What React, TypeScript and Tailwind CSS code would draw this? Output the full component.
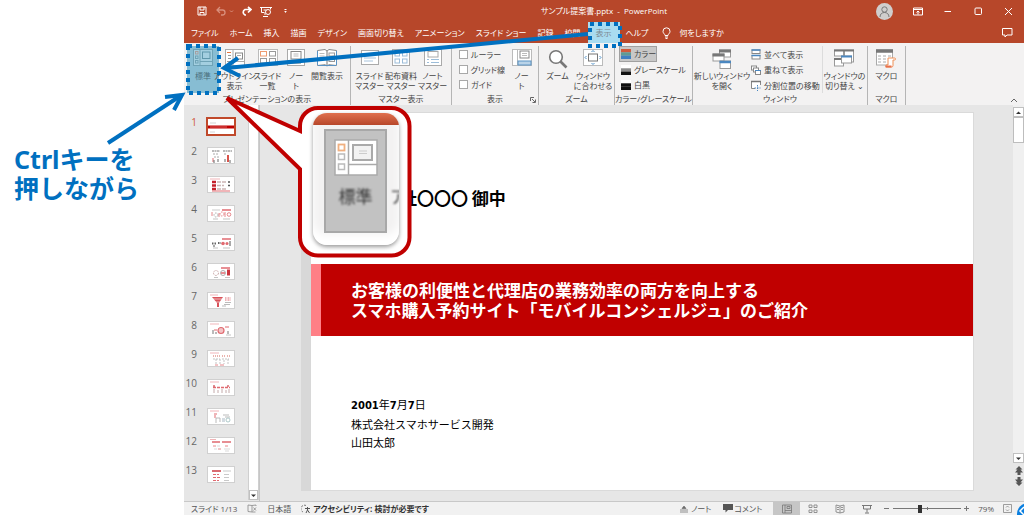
import type { ReactNode } from "react";
import clsx from "clsx";

const uiFont = "font-['Open_Sans','Noto_Sans_CJK_JP',sans-serif]";

/* ---------- icons ---------- */

function Svg({ w, h, children, className }: { w: number; h: number; children: ReactNode; className?: string }) {
  return (
    <svg width={w} height={h} viewBox={`0 0 ${w} ${h}`} fill="none" aria-hidden="true" className={clsx("shrink-0", className)}>
      {children}
    </svg>
  );
}

const NormalIcon = () => (
  <Svg w={20} h={18}>
    <rect x="0.5" y="0.5" width="19" height="16" fill="#a3cfe0" stroke="#6fa3b6" />
    <path d="M7 1v15M7 12.5h12" stroke="#6fa3b6" />
    <rect x="9.5" y="3" width="7.5" height="6.5" stroke="#5f97ab" />
    <rect x="2.5" y="2.5" width="2.5" height="2.5" stroke="#a59fa0" />
    <rect x="2.5" y="7" width="2.5" height="2.5" stroke="#6fa3b6" />
    <rect x="2.5" y="11.5" width="2.5" height="2.5" stroke="#6fa3b6" />
  </Svg>
);

const OutlineIcon = () => (
  <Svg w={20} h={18}>
    <rect x="0.5" y="0.5" width="19" height="16" fill="#fff" stroke="#aaa" />
    <path d="M8 1v15M8 12.5h12" stroke="#aaa" />
    <path d="M2 3.5h4" stroke="#e8743c" />
    <path d="M3 6.5h3M3 9.5h3M2 12.5h4" stroke="#999" />
    <rect x="10.5" y="4" width="7" height="6" stroke="#888" />
    <path d="M12 6.500h4" stroke="#aaa" />
  </Svg>
);

const SorterIcon = () => (
  <Svg w={20} h={18}>
    <rect x="0.5" y="0.5" width="19" height="16" fill="#fff" stroke="#bbb" />
    <rect x="2.5" y="2.5" width="6" height="4.5" stroke="#ee9c70" />
    <rect x="11.5" y="2.5" width="6" height="4.5" stroke="#999" />
    <rect x="2.5" y="9.5" width="6" height="4.5" stroke="#999" />
    <rect x="11.5" y="9.5" width="6" height="4.5" stroke="#999" />
  </Svg>
);

const NotesPageIcon = () => (
  <Svg w={20} h={18}>
    <rect x="1.5" y="0.5" width="17" height="16" fill="#fff" stroke="#aaa" />
    <rect x="5" y="2.5" width="10" height="7.5" stroke="#888" />
    <path d="M7.500 5h5M7.500 7h5M5 12.500h10M5 14.500h10" stroke="#bbb" />
  </Svg>
);

const ReadingIcon = () => (
  <Svg w={20} h={18}>
    <path d="M0.500 1.500 8 .5 10 2l2-1.500 7.500 1v15l-7.500-.8L10 17l-2-1.300-7.500.8z" fill="#fff" stroke="#888" />
    <path d="M10 2v15" stroke="#777" />
    <path d="M1 16.500h18M.5 2v14M19.500 2v14" stroke="#5b93c4" />
    <path d="M2.500 4.500h5M2.500 7h5M2.500 9.500h5" stroke="#bbb" />
    <rect x="12" y="4" width="5.5" height="3" stroke="#999" />
    <rect x="12" y="9.5" width="5.5" height="3" stroke="#999" />
  </Svg>
);

const SlideMasterIcon = () => (
  <Svg w={18} h={18}>
    <rect x="0.5" y="1.5" width="17" height="14" fill="#fff" stroke="#aaa" />
    <path d="M5 5.500h8" stroke="#888" />
    <path d="M3 9h12M3 12h9" stroke="#a9c4dd" />
  </Svg>
);

const HandoutMasterIcon = () => (
  <Svg w={18} h={18}>
    <rect x="0.5" y="0.5" width="17" height="16" fill="#fff" stroke="#aaa" />
    <rect x="3" y="3" width="4.5" height="4" stroke="#9cbdd9" />
    <rect x="10.5" y="3" width="4.5" height="4" stroke="#9cbdd9" />
    <rect x="3" y="10" width="4.5" height="4" stroke="#9cbdd9" />
    <rect x="10.5" y="10" width="4.5" height="4" stroke="#9cbdd9" />
  </Svg>
);

const NotesMasterIcon = () => (
  <Svg w={18} h={18}>
    <rect x="0.5" y="0.5" width="17" height="16" fill="#fff" stroke="#aaa" />
    <rect x="4" y="2.5" width="10" height="5.5" stroke="#aaa" />
    <path d="M3 10.500h2M7 10.500h8M3 13.500h2M7 13.500h8" stroke="#9cbdd9" />
  </Svg>
);

const NotesPaneIcon = () => (
  <Svg w={20} h={18}>
    <rect x="0.5" y="0.5" width="19" height="16" fill="#fff" stroke="#bbb" />
    <path d="M5.500 1v15" stroke="#bbb" />
    <rect x="8" y="2" width="9" height="7" stroke="#888" />
    <path d="M10 4.500h5M10 6.500h5" stroke="#bbb" />
    <rect x="6" y="12" width="13" height="4" fill="#b9d3e8" stroke="#5b93c4" />
  </Svg>
);

const ZoomIcon = () => (
  <Svg w={20} h={20}>
    <circle cx="8" cy="8" r="6.3" fill="#fff" stroke="#777" strokeWidth="1.6" />
    <path d="m12.500 12.500 6 6" stroke="#777" strokeWidth="2.6" />
  </Svg>
);

const FitIcon = () => (
  <Svg w={20} h={18}>
    <rect x="0.5" y="0.5" width="19" height="16" fill="#fff" stroke="#bbb" />
    <rect x="5.5" y="5" width="9" height="7" stroke="#777" />
    <path d="m8.500 3 1.500-1.500L11.500 3M8.500 14l1.500 1.500 1.500-1.500M3.500 7 2 8.500 3.500 10M16.500 7 18 8.500 16.500 10" stroke="#4f90c8" />
  </Svg>
);

const NewWindowIcon = () => (
  <Svg w={20} h={20}>
    <rect x="7.5" y="1" width="11" height="7" fill="#fff" stroke="#999" />
    <path d="M7 2h12" stroke="#777" strokeWidth="3" />
    <rect x="1" y="5" width="11" height="7" fill="#fff" stroke="#999" />
    <path d="M.5 6h12" stroke="#777" strokeWidth="3" />
    <rect x="8" y="12" width="10.5" height="7.5" fill="#fff" stroke="#999" />
    <path d="M7.500 13h11.500" stroke="#4a87c0" strokeWidth="2.5" />
  </Svg>
);

const SwitchWindowIcon = () => (
  <Svg w={20} h={18}>
    <rect x="0.5" y="1" width="9" height="6" fill="#fff" stroke="#999" />
    <rect x="10.5" y="1" width="9" height="12" fill="#fff" stroke="#999" />
    <path d="M0 1.500h20" stroke="#777" strokeWidth="2" />
    <rect x="0.5" y="10" width="9" height="7" fill="#fff" stroke="#999" />
    <path d="M0 10h10" stroke="#777" strokeWidth="2" />
    <rect x="7.5" y="7" width="10" height="7" fill="#fff" stroke="#999" />
    <path d="M7 7.500h11" stroke="#4a87c0" strokeWidth="2" />
  </Svg>
);

const MacroIcon = () => (
  <Svg w={20} h={19}>
    <rect x="0.5" y="1" width="16" height="15" fill="#fff" stroke="#aaa" />
    <path d="M0 2h17" stroke="#777" strokeWidth="3.5" />
    <path d="M2 7h3M7 7h3M12 7h3M2 10h3M7 10h3M2 13h3M7 13h3" stroke="#aaa" />
    <path d="M12 9h6.500a1 1 0 0 1 0 2H17v5.500a1.500 1.500 0 0 1-1.500 1.500H10v-2h2z" fill="#fff" stroke="#ef8f55" />
    <path d="M9.500 17.500h6" stroke="#e8704c" strokeWidth="2" />
  </Svg>
);

const ArrangeIcon = () => (
  <Svg w={10} h={11}>
    <rect x="1" y="1" width="8" height="3.5" fill="#fff" stroke="#888" />
    <rect x="1" y="6.5" width="8" height="3.5" fill="#fff" stroke="#888" />
    <path d="M.5 1h9M.5 6.500h9" stroke="#4a87c0" strokeWidth="1.5" />
  </Svg>
);

const CascadeIcon = () => (
  <Svg w={10} h={11}>
    <rect x="0.5" y="1" width="5" height="4" fill="#fff" stroke="#888" />
    <rect x="2.5" y="3" width="5" height="4" fill="#fff" stroke="#888" />
    <rect x="4.5" y="5.5" width="5" height="4" fill="#fff" stroke="#888" />
    <path d="M4 5.500h6" stroke="#4a87c0" />
  </Svg>
);

const SplitIcon = () => (
  <Svg w={10} h={11}>
    <path d="M4 8.500H.5v-7h9V5" fill="#fff" stroke="#888" />
    <path d="M0 1.500h10" stroke="#777" strokeWidth="1.5" />
    <path d="M6.500 5v6M3.500 8h6" stroke="#4a87c0" strokeDasharray="1.5 1" />
  </Svg>
);

function Swatch({ colors }: { colors: [string, string, string] }) {
  return (
    <Svg w={10} h={10}>
      <rect width="10" height="3.4" fill={colors[0]} />
      <rect y="3.3" width="10" height="3.4" fill={colors[1]} />
      <rect y="6.6" width="10" height="3.4" fill={colors[2]} />
    </Svg>
  );
}

/* ---------- title bar ---------- */

function TitleBar() {
  return (
    <header className="grid h-[22px] shrink-0 grid-cols-[1fr_auto_1fr] items-center bg-[#b7472a] text-white">
      <div className="flex items-center pl-[13px]">
        <button aria-label="上書き保存" className="mr-[9px]">
          <Svg w={10} h={10}>
            <path d="M1 1h8v8H1zM3 1v3h4V1M3 9V6.500h4V9" stroke="#fff" />
          </Svg>
        </button>
        <button aria-label="元に戻す" className="mr-[3px]">
          <Svg w={10} h={10}>
            <path d="M4 1 1 4l3 3M1 4h5.500a2.500 2.500 0 0 1 0 5H5" stroke="#d98f7c" strokeWidth="1.3" />
          </Svg>
        </button>
        <Svg w={5} h={5} className="mr-[7px]">
          <path d="m1 1.500 1.500 1.500L4 1.500" stroke="#d98f7c" />
        </Svg>
        <button aria-label="やり直し" className="mr-[8px]">
          <Svg w={11} h={10}>
            <path d="m7 1 3 2.500-3 3M10 3.500H4A3 3 0 0 0 4 9h1" stroke="#fff" strokeWidth="1.7" />
          </Svg>
        </button>
        <button aria-label="先頭から開始" className="mr-[11px]">
          <Svg w={12} h={11}>
            <path d="M0 1.500h12M1.500 1.500v5h3M10.500 1.500v2M5 7v2M3 10.500h5" stroke="#fff" />
            <circle cx="8" cy="6" r="2.5" stroke="#fff" />
            <path d="M3.500 4h3" stroke="#fff" />
          </Svg>
        </button>
        <button aria-label="クイック アクセスのカスタマイズ">
          <Svg w={5} h={6}>
            <path d="M1.500 1.500h2" stroke="#fff" />
            <path d="M1.200 3h2.600L2.500 5z" fill="#fff" />
          </Svg>
        </button>
      </div>
      <h1 className="whitespace-pre text-[8px] font-normal">サンプル提案書.pptx  -  PowerPoint</h1>
      <div className="flex items-center justify-end gap-[20px] pr-[11px]">
        <button aria-label="アカウント">
          <Svg w={17} h={17}>
            <circle cx="8.5" cy="8.5" r="8.5" fill="#d0cecd" />
            <circle cx="8.5" cy="6.5" r="2.7" stroke="#777" />
            <path d="M4 14c0-3 2-4.500 4.500-4.500S13 11 13 14" stroke="#777" />
          </Svg>
        </button>
        <button aria-label="リボンの表示オプション">
          <Svg w={10} h={9}>
            <path d="M.5 1h9v7h-9zM.5 2.500h9M5 7.500V4.500M3.500 5.500 5 4l1.500 1.500" stroke="#fff" />
          </Svg>
        </button>
        <button aria-label="最小化">
          <Svg w={10} h={9}>
            <path d="M1.500 4.500H8" stroke="#fff" />
          </Svg>
        </button>
        <button aria-label="元に戻す (縮小)">
          <Svg w={10} h={9}>
            <rect x="2" y="1" width="6.5" height="6.5" rx="1" stroke="#fff" />
          </Svg>
        </button>
        <button aria-label="閉じる">
          <Svg w={10} h={9}>
            <path d="m2 1 7 7M9 1 2 8" stroke="#fff" />
          </Svg>
        </button>
      </div>
    </header>
  );
}

const tabs = ["ファイル", "ホーム", "挿入", "描画", "デザイン", "画面切り替え", "アニメーション", "スライド ショー", "記録", "校閲"];

function TabBar() {
  return (
    <nav className="flex h-[21px] shrink-0 items-center bg-[#b7472a] pr-[11px] pl-[7px] text-[8px] whitespace-nowrap text-white">
      <div className="flex items-center gap-[11px]">
        {tabs.map((tab) => (
          <button key={tab}>{tab}</button>
        ))}
      </div>
      <button aria-current="page" className="ml-[7px] h-[21px] w-[32px] bg-[#a9dcf0] text-[#7d8a90]">
        表示
      </button>
      <button className="ml-[6px]">ヘルプ</button>
      <button className="ml-[14px] flex items-center gap-[8px]">
        <Svg w={9} h={12}>
          <path d="M3 8.500C3 7 1 6.500 1 4.300a3.500 3.500 0 0 1 7 0C8 6.500 6 7 6 8.500zM3 10h3M3.500 11.500h2" stroke="#fff" />
        </Svg>
        何をしますか
      </button>
      <button aria-label="コメント" className="ml-auto">
        <Svg w={11} h={10}>
          <path d="M.5.5h9.500v6.500H5L3 9V7H.5z" stroke="#fff" />
        </Svg>
      </button>
    </nav>
  );
}

/* ---------- ribbon ---------- */

function Group({ label, className, children }: { label: string; className?: string; children: ReactNode }) {
  return (
    <section className="relative flex h-[59px] shrink-0 flex-col border-r border-[#b5b5b5]">
      <div className={clsx("flex flex-1 items-start", className)}>{children}</div>
      <h2 className="h-[11px] text-center font-normal">{label}</h2>
    </section>
  );
}

function BigButton({ icon, lines, className }: { icon: ReactNode; lines: string[]; className: string }) {
  return (
    <button className={clsx("flex shrink-0 flex-col items-center pt-[3px]", className)}>
      <span className="flex h-[22px] items-start">{icon}</span>
      {lines.map((line) => (
        <span key={line}>{line}</span>
      ))}
    </button>
  );
}

function Ribbon() {
  return (
    <div className="flex h-[62px] shrink-0 items-start bg-[#f3f2f2] pt-[3px] text-[8px] leading-[10px] whitespace-nowrap text-[#444]">
      <Group label="プレゼンテーションの表示" className="px-[3px]">
        <button className="flex h-[47px] w-[32px] flex-col items-center bg-[#87bdd3] pt-[3px] text-[#4b6f7d]">
          <span className="h-[22px]">
            <NormalIcon />
          </span>
          標準
        </button>
        <BigButton icon={<OutlineIcon />} lines={["アウトライン", "表示"]} className="w-[31px]" />
        <BigButton icon={<SorterIcon />} lines={["スライド", "一覧"]} className="w-[35px]" />
        <BigButton icon={<NotesPageIcon />} lines={["ノー", "ト"]} className="w-[22px]" />
        <BigButton icon={<ReadingIcon />} lines={["閲覧表示"]} className="w-[40px]" />
      </Group>
      <Group label="マスター表示" className="px-[3px]">
        <BigButton icon={<SlideMasterIcon />} lines={["スライド", "マスター"]} className="w-[31px]" />
        <BigButton icon={<HandoutMasterIcon />} lines={["配布資料", "マスター"]} className="w-[32px]" />
        <BigButton icon={<NotesMasterIcon />} lines={["ノート", "マスター"]} className="w-[31px]" />
      </Group>
      <Group label="表示" className="pl-[7px]">
        <div className="flex w-[46px] flex-col pt-px">
          {["ルーラー", "グリッド線", "ガイド"].map((name) => (
            <label key={name} className="flex h-[15px] items-center gap-[3px]">
              <input type="checkbox" className="size-[9px] appearance-none border border-[#a8a8a8] bg-white" />
              {name}
            </label>
          ))}
        </div>
        <BigButton icon={<NotesPaneIcon />} lines={["ノー", "ト"]} className="w-[33px]" />
        <Svg w={6} h={6} className="absolute right-[2px] bottom-[2px]">
          <path d="M.5 4V.5H4M2 2l3 3M5.500 2.500v3h-3" stroke="#666" />
        </Svg>
      </Group>
      <Group label="ズーム" className="px-[2px]">
        <BigButton icon={<ZoomIcon />} lines={["ズーム"]} className="w-[33px]" />
        <BigButton icon={<FitIcon />} lines={["ウィンドウ", "に合わせる"]} className="w-[38px]" />
      </Group>
      <Group label="カラー/グレースケール" className="flex-col pl-[4px]">
        <button className="flex h-[16px] w-[38px] items-center gap-[3px] border border-[#a0a0a0] bg-[#c8c8c8] px-px">
          <Swatch colors={["#d05a3c", "#5f9a94", "#3f7fc0"]} />
          カラー
        </button>
        <button className="flex h-[15px] items-center gap-[3px] pl-[2px]">
          <Swatch colors={["#ffffff", "#8a8a8a", "#111111"]} />
          グレースケール
        </button>
        <button className="flex h-[15px] items-center gap-[3px] pl-[2px]">
          <Swatch colors={["#ffffff", "#111111", "#111111"]} />
          白黒
        </button>
      </Group>
      <Group label="ウィンドウ" className="pr-px">
        <BigButton icon={<NewWindowIcon />} lines={["新しいウィンドウ", "を開く"]} className="w-[58px]" />
        <div className="flex w-[72px] flex-col border-r border-[#dcdcdc] pt-px">
          <button className="flex h-[15px] items-center gap-[3px]">
            <ArrangeIcon />
            並べて表示
          </button>
          <button className="flex h-[16px] items-center gap-[3px]">
            <CascadeIcon />
            重ねて表示
          </button>
          <button className="flex h-[15px] items-center gap-[3px]">
            <SplitIcon />
            分割位置の移動
          </button>
        </div>
        <BigButton icon={<SwitchWindowIcon />} lines={["ウィンドウの", "切り替え ⌄"]} className="w-[43px]" />
      </Group>
      <Group label="マクロ" className="px-px">
        <BigButton icon={<MacroIcon />} lines={["マクロ"]} className="w-[35px]" />
      </Group>
      <button aria-label="リボンを折りたたむ" className="mt-auto mr-[6px] mb-[2px] ml-auto">
        <Svg w={8} h={5}>
          <path d="m1 4 3-3 3 3" stroke="#666" />
        </Svg>
      </button>
    </div>
  );
}

/* ---------- thumbnails ---------- */

const R = "#e06a70";
const G = "#9b9b9b";

const thumbs: ReactNode[] = [
  <>
    <path d="M2 4h6M2 13h5" stroke="#bbb" strokeWidth=".6" />
    <path d="M0 8h27" stroke="#c00000" strokeWidth="3" />
    <path d="M2 8h17" stroke="#e9a0a0" strokeWidth=".6" />
  </>,
  <>
    <path d="M4 3h8M15 3h9" stroke="#777" strokeWidth="1.2" strokeDasharray="2 .5" />
    <path d="M5 6h6M16 6h3M6 9h5" stroke="#aaa" strokeDasharray="2 1" />
    <path d="M5 10v4" stroke={R} />
    <path d="M20 7v7" stroke="#d9534a" strokeWidth="2" />
    <path d="M6 12v3M10 11v3M17 11v3M22 12v3" stroke="#666" />
  </>,
  <>
    <path d="M2 2h10" stroke={R} strokeWidth=".5" />
    <path d="M4 5h4M4 8.500h4M4 12h4" stroke="#c4202a" strokeWidth="2.500" />
    <path d="M9 5h9M9 8.500h7M9 12h9" stroke="#ccb4b4" strokeWidth="1.5" strokeDasharray="4 1" />
    <path d="M20 5h2M20 8.500h2" stroke="#555" strokeWidth="1.5" />
    <path d="M4 14h18" stroke={R} />
  </>,
  <>
    <path d="M14 4h9" stroke={R} strokeWidth="1.5" />
    <path d="M4 4h8" stroke="#aaa" strokeWidth=".6" />
    <path d="M4 6v4M11 7v4M17 6v5" stroke={R} strokeWidth=".8" />
    <circle cx="8" cy="9" r="2" stroke={G} strokeWidth=".8" strokeDasharray="1.5 1" />
    <circle cx="14" cy="8" r="2" stroke={R} strokeWidth=".8" strokeDasharray="1.5 1" />
    <circle cx="21" cy="8.5" r="1.8" stroke={R} strokeWidth=".8" />
    <path d="M5 13h5M15 13h7" stroke="#aaa" strokeWidth=".7" />
  </>,
  <>
    <path d="M14 4h9" stroke={R} strokeWidth="1.5" />
    <path d="M4 8.500h5M10 8h3" stroke="#666" strokeWidth="2" strokeDasharray="1.5 1" />
    <circle cx="15" cy="8.5" r="1.8" fill={R} />
    <circle cx="19" cy="8.5" r="1.5" fill={R} />
    <path d="M22 6v5M5 11h2" stroke="#555" />
    <path d="M5 13h5M15 13h7" stroke="#aaa" strokeWidth=".7" />
  </>,
  <>
    <path d="M13 4h9" stroke={R} strokeWidth="1.5" />
    <circle cx="8" cy="9" r="2.5" stroke="#caa" strokeDasharray="2 1" />
    <circle cx="15" cy="9" r="2.5" stroke={G} strokeWidth=".8" />
    <path d="M13 9h4" stroke={R} strokeWidth="1.5" />
    <path d="M20.500 5.500v6" stroke="#c9353d" strokeWidth="3" />
    <path d="M6 13.500h4M17 13.500h5" stroke="#aaa" strokeWidth=".7" />
  </>,
  <>
    <path d="M2 2h8" stroke={R} strokeWidth=".5" />
    <path d="M4 4h11l-4 6v4H9v-4z" fill="#d9535a" />
    <path d="M5 6h9M7 9h5" stroke="#fff" strokeWidth=".6" />
    <path d="M17 5h6M17 7h6" stroke={R} strokeDasharray="1 .5" />
    <path d="M17 9.500h6M16 11.500h6M14 13h4" stroke="#aaa" strokeWidth=".8" />
  </>,
  <>
    <path d="M2 2h9" stroke={R} strokeWidth=".5" />
    <circle cx="13" cy="8.5" r="3" fill="#f3c4c6" stroke={R} strokeWidth="1.2" />
    <path d="M6 8h3M17 5h4" stroke={R} />
    <path d="M5 8v4M8 10v2M20 9v3" stroke="#777" />
    <path d="M18 13h5" stroke="#aaa" strokeWidth=".7" />
  </>,
  <>
    <path d="M2 2h9" stroke={R} strokeWidth=".5" />
    <path d="M5 5h3M9 5h3M14 5h3M19 5h3" stroke="#e39a92" strokeWidth="1.5" strokeDasharray="1 1" />
    <path d="M8 8v5M12 8v5M16 9v4M20 8v5M5 8h7M14 8h7" stroke="#aaa" strokeWidth=".7" strokeDasharray="2 1" />
    <path d="M7 14h3M12 14h4" stroke={R} strokeWidth=".8" />
  </>,
  <>
    <path d="M2 2h9" stroke={R} strokeWidth=".5" />
    <path d="M5 7.500h17" stroke={R} strokeWidth="1.5" strokeDasharray="3 1" />
    <path d="M6 5v2M20 5v2" stroke="#c4202a" />
    <path d="M6 9v4M10 10v3M14 9v4M18 10v3M21 9v4" stroke="#c4aaaa" />
  </>,
  <>
    <path d="M2 2h9" stroke={R} strokeWidth=".5" />
    <path d="M6 5h3M7 6v3" stroke={R} />
    <path d="M8 9v5M12 9v4M8 9h4M15 6h6M17 8h5" stroke="#aaa" strokeWidth=".8" />
    <path d="M14 10h3M14 12h3" stroke="#a8b8c4" />
    <circle cx="20" cy="11" r="2" stroke="#9bb" strokeWidth=".8" />
  </>,
  <>
    <path d="M2 1.500h6" stroke={R} strokeWidth=".5" />
    <path d="M4 4h8M14 4h9" stroke={R} strokeWidth="1.5" />
    <path d="M5 8h3M10 11h3M17 8h3" stroke={R} strokeWidth=".8" />
    <path d="M9 8h3M6 11h3M16 11h6M17 13h4" stroke="#ccc" strokeWidth=".7" />
  </>,
  <>
    <path d="M4 4h9" stroke="#cc3a42" strokeWidth="1.5" />
    <path d="M5 7.500h6M5 10.500h7M5 13.500h6" stroke={R} strokeDasharray="3 1" />
    <path d="M15 4h8M16 7.500h5M16 10.500h5M16 13.500h5" stroke="#bbb" strokeWidth=".8" />
  </>,
];

function ThumbnailPane() {
  return (
    <aside className="flex shrink-0 overflow-hidden border-r border-[#c6c6c6]">
      <ol className="w-[64px] pt-[10px]">
        {thumbs.map((art, i) => (
          <li key={i} className="h-[29px]">
            <button className="flex w-full items-start" aria-label={`スライド ${i + 1}`}>
              <span
                className={clsx(
                  "w-[13px] shrink-0 text-right text-[10px] leading-[14px]",
                  i === 0 ? "text-[#d0593a]" : "text-[#666]",
                )}
              >
                {i + 1}
              </span>
              <span
                className={clsx("mt-[4px] ml-[11px] bg-white", i === 0 ? "ring-2 ring-[#c0492b]" : "ring-1 ring-[#d0d0d0]")}
              >
                <Svg w={26} h={15}>
                  {art}
                </Svg>
              </span>
            </button>
          </li>
        ))}
      </ol>
      <div className="mb-px flex w-[11px] flex-col justify-end border-x border-[#cfcfcf] bg-white">
        <ScrollButton label="下へスクロール" path="M2 3.500h5L4.500 6z" />
      </div>
    </aside>
  );
}

function ScrollButton({ label, path }: { label: string; path: string }) {
  return (
    <button aria-label={label} className="flex h-[10px] items-center justify-center border border-[#c0c0c0] bg-white">
      <Svg w={9} h={9}>
        <path d={path} fill="#333" />
      </Svg>
    </button>
  );
}

/* ---------- slide ---------- */

function Slide() {
  return (
    <article className="flex flex-1 flex-col border border-l-0 border-[#dadada] bg-white font-['Noto_Sans_CJK_JP',sans-serif] text-black">
      <p className="mt-[73px] pl-[89px] text-[17px] leading-[24px] font-bold">社〇〇〇 御中</p>
      <h2 className="mt-[54px] border-l-[10px] border-[#ff7f86] bg-[#c00000] py-[16px] pl-[30px] text-[17px] leading-[20px] font-bold whitespace-nowrap text-white">
        お客様の利便性と代理店の業務効率の両方を向上する
        <br />
        スマホ購入予約サイト「モバイルコンシェルジュ」のご紹介
      </h2>
      <div className="mt-[59px] pl-[40px] text-[11px] leading-[18px]">
        <p>
          <Digits>2001</Digits>年<Digits>7</Digits>月<Digits>7</Digits>日
        </p>
        <p>株式会社スマホサービス開発</p>
        <p>山田太郎</p>
      </div>
    </article>
  );
}

function Digits({ children }: { children: string }) {
  return <span className="font-['DejaVu_Sans',sans-serif] text-[10px] font-bold">{children}</span>;
}

function Editor() {
  return (
    <main className="ml-px flex min-w-0 flex-1">
      <div className="flex flex-1 pt-[7px] pr-[39px] pb-[10px] pl-[40px]">
        <div className="w-[10px] shrink-0 bg-[#d8d8d8]" />
        <Slide />
      </div>
      <div className="flex w-[11px] shrink-0 flex-col bg-[#f0f0f0] pt-[2px]">
        <ScrollButton label="上へスクロール" path="M2 6h5L4.500 3.500z" />
        <div className="h-[26px] border border-[#bdbdbd] bg-white" />
        <div className="mt-auto flex flex-col">
          <ScrollButton label="下へスクロール" path="M2 3.500h5L4.500 6z" />
        </div>
        <div className="flex flex-col items-center gap-[2px] bg-[#e6e6e6] pt-[3px] pb-[15px]">
          <button aria-label="前のスライド">
            <Svg w={8} h={9}>
              <path d="M4 0 7.500 3.500H5.500L8 6.500H5.500V9h-3V6.500H0l2.500-3H.5z" fill="#555" />
            </Svg>
          </button>
          <button aria-label="次のスライド">
            <Svg w={8} h={9}>
              <path d="M4 9 .5 5.500h2L0 2.500h2.500V0h3v2.500H8l-2.500 3h2z" fill="#555" />
            </Svg>
          </button>
        </div>
      </div>
    </main>
  );
}

/* ---------- status bar ---------- */

function StatusBar() {
  return (
    <footer className="flex h-[14px] shrink-0 items-center border-t border-[#c8c8c8] bg-[#f1f1f1] pl-[7px] text-[8px] leading-[12px] whitespace-nowrap text-[#555]">
      <span>スライド 1/13</span>
      <button aria-label="スペル チェック" className="ml-[10px]">
        <Svg w={10} h={9}>
          <path d="M5 8V1.500L1 1v6.500zM5 8h3.500M5 1.500 9 1v1M6.500 3.500l2.500 3M9 3.500l-2.500 3" stroke="#888" strokeWidth=".8" />
        </Svg>
      </button>
      <button className="ml-[10px]">日本語</button>
      <button className="ml-[10px] flex items-center gap-[2px] font-bold text-[#333]">
        <Svg w={10} h={10}>
          <path d="M5 1.500A3.500 3.500 0 0 0 2 8" stroke="#777" strokeDasharray="2 1" />
          <path d="M4 4.500h5M6.500 3v3L5 9M6.500 6 8.500 9" stroke="#555" />
        </Svg>
        アクセシビリティ: 検討が必要です
      </button>
      <div className="ml-auto flex h-full items-center">
        <button className="flex items-center gap-[3px]">
          <Svg w={8} h={8}>
            <path d="M4 1 6 3.500H2zM0 5h8M0 7h8" fill="#666" stroke="#777" strokeWidth=".8" />
          </Svg>
          ノート
        </button>
        <button className="ml-[12px] flex items-center gap-px">
          <Svg w={10} h={9}>
            <path d="M0 0h10v6H5L2.500 8.500V6H0z" fill="#555" />
          </Svg>
          コメント
        </button>
        <button aria-label="標準" className="ml-[11px] flex h-full w-[27px] items-center justify-center bg-[#c6c6c6]">
          <Svg w={10} h={10}>
            <path d="M.5 1h9v8h-9zM3 1v8M3 6.500h6.500M5 2.500h3v2H5z" stroke="#777" strokeWidth=".8" />
          </Svg>
        </button>
        <button aria-label="スライド一覧" className="ml-[8px]">
          <Svg w={10} h={10}>
            <path d="M1 1h3v2.500H1zM6 1h3v2.500H6zM1 6h3v2.500H1zM6 6h3v2.500H6z" stroke="#888" strokeWidth=".9" />
          </Svg>
        </button>
        <button aria-label="閲覧表示" className="ml-[17px]">
          <Svg w={10} h={10}>
            <path d="M5 2 1 1v7l4 1 4-1V1zM5 2v7M2 3.500h2M2 5.500h2M6 3.500h2M6 5.500h2" stroke="#888" strokeWidth=".9" />
          </Svg>
        </button>
        <button aria-label="スライド ショー" className="ml-[17px]">
          <Svg w={10} h={10}>
            <path d="M0 1.500h10M1.500 1.500V5h7V1.500M5 5v3.500M3 9h4" stroke="#777" />
          </Svg>
        </button>
        <button aria-label="縮小" className="ml-[12px]">
          <Svg w={5} h={5}>
            <path d="M0 2.500h5" stroke="#777" />
          </Svg>
        </button>
        <span className="relative ml-[4px] flex items-center">
          <input
            type="range"
            min={10}
            max={190}
            defaultValue={79}
            aria-label="ズーム"
            className="h-px w-[68px] appearance-none bg-[#777] [&::-webkit-slider-thumb]:h-[8px] [&::-webkit-slider-thumb]:w-[4px] [&::-webkit-slider-thumb]:appearance-none [&::-webkit-slider-thumb]:bg-[#333]"
          />
          <span className="absolute left-1/2 h-[3px] w-px bg-[#777]" />
        </span>
        <button aria-label="拡大" className="ml-[3px]">
          <Svg w={5} h={5}>
            <path d="M0 2.500h5M2.500 0v5" stroke="#777" />
          </Svg>
        </button>
        <button className="ml-[9px]">79%</button>
        <button aria-label="ウィンドウに合わせる" className="mr-[12px] ml-[9px]">
          <Svg w={9} h={9}>
            <path d="M.5.5h8v8h-8z" stroke="#888" strokeWidth=".8" />
            <path d="M3 3.500 4.500 2 6 3.500M3 5.500 4.500 7 6 5.500" stroke="#888" strokeWidth=".8" />
          </Svg>
        </button>
      </div>
    </footer>
  );
}

/* ---------- annotations drawn over the window ---------- */

function Annotations() {
  return (
    <div className="pointer-events-none absolute inset-0 overflow-hidden">
      <svg width="1024" height="515" viewBox="0 0 1024 515" fill="none" aria-hidden="true">
        <g stroke="#0070c0" strokeWidth="4">
          <rect x="188" y="46" width="31" height="47" strokeDasharray="4 4" />
          <rect x="590" y="24" width="30" height="22" strokeDasharray="4 4" />
          <path d="M588 34 226 68" />
          <path d="m238 58-14 10 16 8" />
          <path d="M108 143 181 95.500" />
          <path d="m165 97 17-2-8 15" />
        </g>
        <path
          d="M318 108H391.500A18 18 0 0 1 409.500 126V237.500A18 18 0 0 1 391.500 255.500H318A18 18 0 0 1 300 237.500V169L227 98 300 131V126A18 18 0 0 1 318 108Z"
          fill="#fff"
          stroke="#c00000"
          strokeWidth="4"
        />
        <circle cx="1028" cy="514" r="11" fill="#0a7fe0" />
        <path d="m1024 507-4 4 4 4" stroke="#fff" strokeWidth="1.5" />
      </svg>
      <div className="absolute top-[113px] left-[313px] h-[132px] w-[86px] overflow-hidden rounded-[14px] bg-[#f3f2f2] shadow-[0_2px_4px_#0006,inset_0_-10px_8px_#fff]">
        <div className="h-[12px] bg-linear-to-b from-[#e0714f] to-[#b7472a]" />
        <div className="flex gap-[3px] pt-[4px] pl-[11px] text-[17px] leading-[20px] text-[#333]">
          <div className="flex h-[104px] w-[63px] shrink-0 flex-col items-center border-2 border-[#a8a8a8] bg-[#c2c2c2] pt-[8px]">
            <Svg w={44} h={38} className="blur-[0.5px]">
              <rect x="1" y="1" width="42" height="35" fill="#fff" stroke="#aaa" strokeWidth="1.5" />
              <path d="M14.500 1v35M14.500 25.500H43" stroke="#aaa" strokeWidth="1.5" />
              <rect x="19" y="6" width="19" height="15" fill="#f2f2f2" stroke="#aaa" strokeWidth="2" />
              <path d="M25 12h8M25 14.500h8" stroke="#ccc" />
              <rect x="4.5" y="5.5" width="6" height="6" stroke="#f0b080" strokeWidth="1.8" />
              <rect x="4.500" y="15" width="6" height="5.5" stroke="#bbb" strokeWidth="1.5" />
              <rect x="4.500" y="25" width="6" height="5.5" stroke="#bbb" strokeWidth="1.5" />
            </Svg>
            <span className="mt-[10px] blur-[1px]">標準</span>
          </div>
          <span className="mt-[58px] blur-[1px]">ア</span>
        </div>
      </div>
    </div>
  );
}

export default function App() {
  return (
    <div lang="ja" className={clsx("relative flex h-screen w-full overflow-hidden bg-white", uiFont)}>
      <div className="w-[184px] shrink-0 pt-[145px] pl-[14px]">
        <p className="font-['Noto_Sans','Noto_Sans_CJK_JP',sans-serif] text-[25px] leading-[29px] font-bold whitespace-nowrap text-[#0070c0]">
          Ctrlキーを
          <br />
          押しながら
        </p>
      </div>
      <div className="flex min-w-0 flex-1 flex-col bg-[#e6e6e6] [font-feature-settings:'palt']">
        <TitleBar />
        <TabBar />
        <Ribbon />
        <div className="flex min-h-0 flex-1 [font-feature-settings:normal]">
          <ThumbnailPane />
          <Editor />
        </div>
        <StatusBar />
      </div>
      <Annotations />
    </div>
  );
}
